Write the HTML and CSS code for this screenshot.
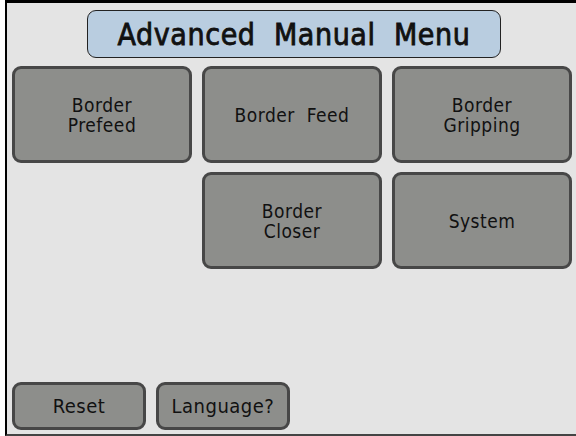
FILE: index.html
```html
<!DOCTYPE html>
<html>
<head>
<meta charset="utf-8">
<link rel="stylesheet" href="styles.css">
</head>
<body>
<div class="screen">
  <div class="title-row">
    <div class="title">Advanced&nbsp; Manual&nbsp; Menu</div>
  </div>
  <div class="grid">
    <button class="btn">Border<br>Prefeed</button>
    <button class="btn">Border&nbsp; Feed</button>
    <button class="btn">Border<br>Gripping</button>
    <div class="empty"></div>
    <button class="btn">Border<br>Closer</button>
    <button class="btn">System</button>
  </div>
  <div class="bottom">
    <button class="btn small">Reset</button>
    <button class="btn small">Language?</button>
  </div>
</div>
</body>
</html>
```
FILE: styles.css
```css
html, body {
  margin: 0;
  padding: 0;
  background: #ffffff;
}
body {
  width: 576px;
  height: 436px;
  overflow: hidden;
  font-family: "DejaVu Sans Condensed", "DejaVu Sans", sans-serif;
}
.screen {
  box-sizing: border-box;
  margin-left: 5px;
  width: 571px;
  height: 436px;
  background: #e4e4e4;
  border-top: 3px solid #000;
  border-left: 2px solid #000;
  border-bottom: 2px solid #444;
  padding: 0 0 0 5px;
  display: flex;
  flex-direction: column;
}
.title-row {
  display: flex;
  padding-top: 7px;
  padding-left: 75px;
}
.title {
  box-sizing: border-box;
  width: 414px;
  height: 48px;
  background: #b9cde0;
  border: 1.5px solid #222;
  border-radius: 9px;
  display: flex;
  align-items: center;
  justify-content: center;
  font-size: 30px;
  font-weight: 400;
  -webkit-text-stroke: 0.8px #111;
  color: #111;
  letter-spacing: 0.6px;
}
.grid {
  margin-top: 8px;
  display: grid;
  grid-template-columns: 180px 180px 180px;
  grid-auto-rows: 97px;
  column-gap: 10px;
  row-gap: 9px;
}
.btn {
  box-sizing: border-box;
  background: #8d8e8b;
  border: 3px solid #474747;
  border-radius: 9px;
  font-family: "DejaVu Sans Condensed", "DejaVu Sans", sans-serif;
  font-size: 19px;
  line-height: 20px;
  letter-spacing: 0.5px;
  color: #111;
  padding: 0;
  text-align: center;
}
.bottom {
  margin-top: auto;
  margin-bottom: 4px;
  display: flex;
  gap: 10px;
}
.btn.small {
  width: 134px;
  height: 48px;
  font-size: 20px;
}
```
